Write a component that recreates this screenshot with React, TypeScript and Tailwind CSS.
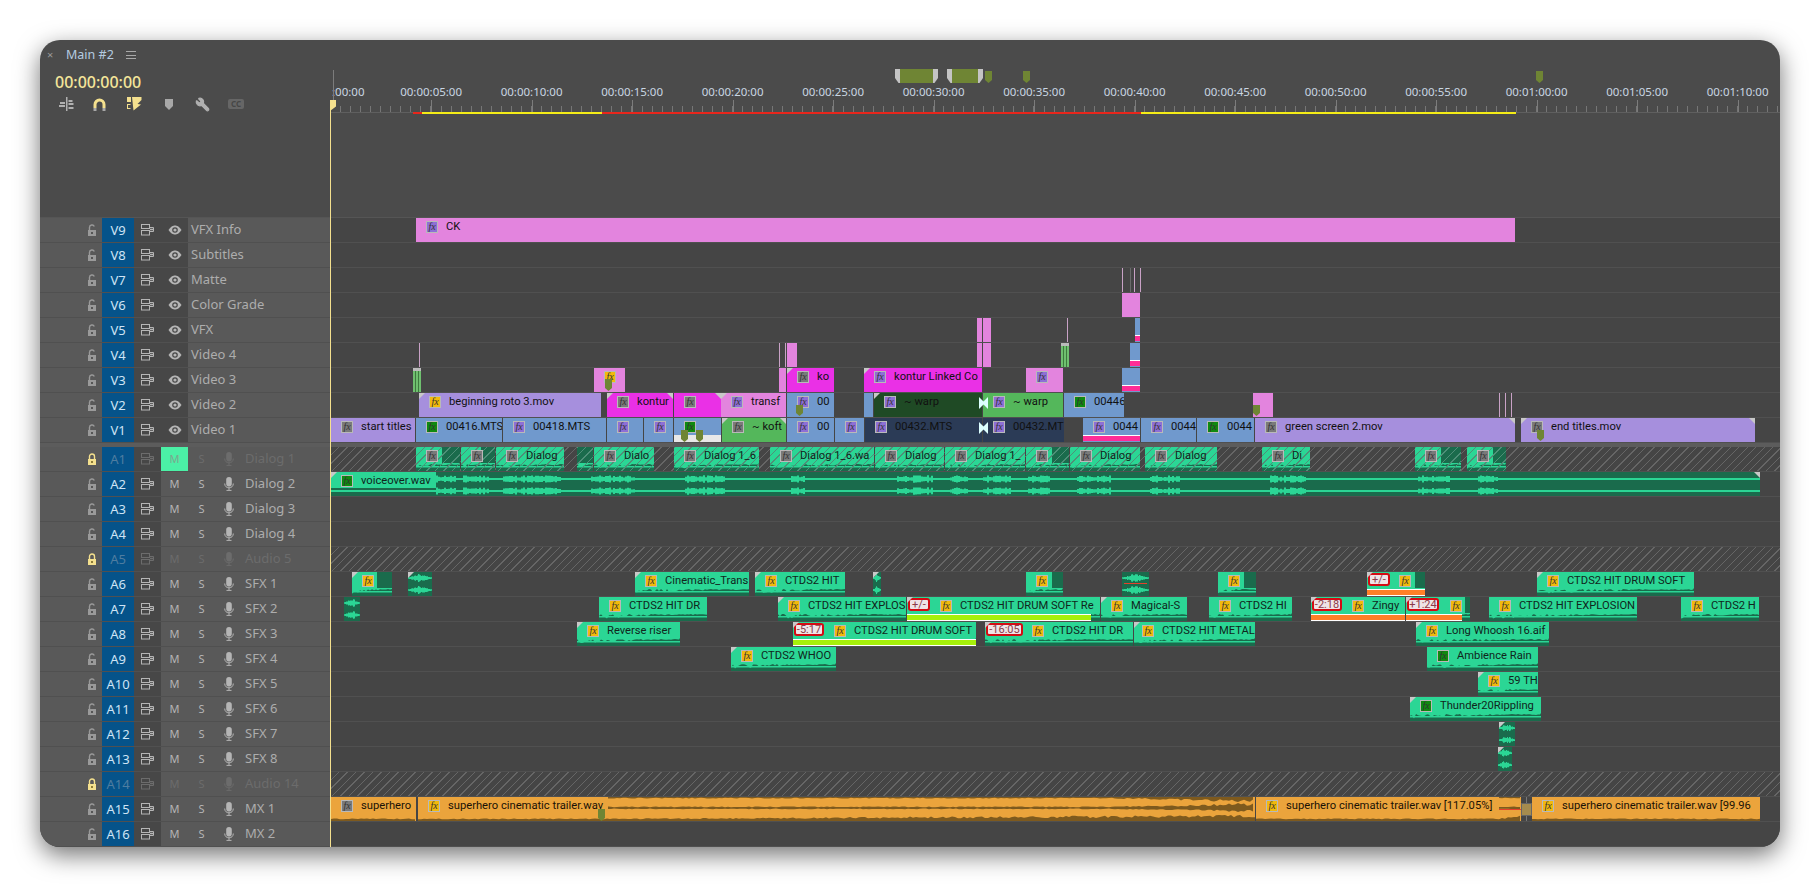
import { Wrench } from 'lucide-react';

const ORIGIN = 330;

type Fx = 'grey' | 'yellow' | 'green' | 'purple';

interface VClip {
  a: number;
  b: number;
  color: string;
  label?: string;
  fx?: Fx;
  tl?: boolean;
  tr?: boolean;
  stripe?: number; // pink stripe offset from clip top
  white?: boolean;
}

interface AClip {
  a: number;
  b: number;
  label?: string;
  fx?: Fx;
  end?: number; // where the light label zone stops
  pad?: number; // space left of the fx badge
  tag?: string;
  tagW?: number;
  bar?: string;
  barEnd?: number;
  tl?: boolean;
  mini?: boolean;
  redline?: boolean;
}

const FX_BG: Record<Fx, string> = {
  grey: 'bg-[#7a7a7a]',
  yellow: 'bg-[#f2b90c]',
  green: 'bg-[#0f8a0f]',
  purple: 'bg-[#8e6fd6]',
};

const BLUE = 'bg-[#7099cd]';
const LAV = 'bg-[#a68fdd]';
const PINK = 'bg-[#e384de]';
const MAG = 'bg-[#ea30e6]';
const GRN = 'bg-[#54b75b]';

const VIDEO: { id: string; name: string; clips: VClip[]; lines?: number[] }[] = [
  { id: 'V9', name: 'VFX Info', clips: [{ a: 416, b: 1515, color: PINK, label: 'CK', fx: 'purple' }] },
  { id: 'V8', name: 'Subtitles', clips: [] },
  { id: 'V7', name: 'Matte', clips: [], lines: [1122, 1134, 1140] },
  { id: 'V6', name: 'Color Grade', clips: [{ a: 1122, b: 1140, color: PINK }] },
  {
    id: 'V5',
    name: 'VFX',
    clips: [
      { a: 977, b: 982, color: PINK },
      { a: 983, b: 991, color: PINK },
      { a: 1135, b: 1140, color: BLUE, stripe: 17 },
    ],
    lines: [1067],
  },
  {
    id: 'V4',
    name: 'Video 4',
    clips: [
      { a: 787, b: 797, color: PINK },
      { a: 977, b: 982, color: PINK },
      { a: 983, b: 991, color: PINK },
      { a: 1130, b: 1140, color: BLUE, stripe: 17 },
    ],
    lines: [779, 785, 419],
  },
  {
    id: 'V3',
    name: 'Video 3',
    clips: [
      { a: 594, b: 625, color: PINK, fx: 'yellow' },
      { a: 779, b: 786, color: PINK },
      { a: 787, b: 834, color: MAG, label: 'ko', fx: 'grey', tl: true },
      { a: 864, b: 982, color: MAG, label: 'kontur Linked Co', fx: 'purple', tl: true },
      { a: 1026, b: 1063, color: PINK, fx: 'purple' },
      { a: 1122, b: 1140, color: BLUE, stripe: 17 },
    ],
  },
  {
    id: 'V2',
    name: 'Video 2',
    clips: [
      { a: 419, b: 601, color: LAV, label: 'beginning roto 3.mov', fx: 'yellow', tl: true },
      { a: 607, b: 673, color: MAG, label: 'kontur', fx: 'grey', tl: true, tr: true },
      { a: 674, b: 721, color: MAG, fx: 'grey', tr: true },
      { a: 721, b: 786, color: PINK, label: 'transf', fx: 'purple', tl: true },
      { a: 787, b: 834, color: BLUE, label: '00', fx: 'purple' },
      { a: 864, b: 873, color: BLUE },
      { a: 874, b: 982, color: 'bg-[#1f4a25]', label: '~ warp', fx: 'purple', tl: true },
      { a: 983, b: 1063, color: GRN, label: '~ warp', fx: 'purple' },
      { a: 1064, b: 1124, color: BLUE, label: '00446', fx: 'green' },
      { a: 1253, b: 1273, color: PINK },
    ],
    lines: [1499, 1505, 1511],
  },
  {
    id: 'V1',
    name: 'Video 1',
    clips: [
      { a: 331, b: 415, color: LAV, label: 'start titles', fx: 'grey' },
      { a: 416, b: 502, color: BLUE, label: '00416.MTS', fx: 'green' },
      { a: 503, b: 606, color: BLUE, label: '00418.MTS', fx: 'purple' },
      { a: 607, b: 643, color: BLUE, fx: 'purple' },
      { a: 644, b: 673, color: BLUE, fx: 'purple' },
      { a: 674, b: 721, color: BLUE, fx: 'green', white: true },
      { a: 722, b: 786, color: GRN, label: '~ koft', fx: 'grey', tl: true, tr: true },
      { a: 787, b: 834, color: BLUE, label: '00', fx: 'purple' },
      { a: 835, b: 864, color: BLUE, fx: 'purple' },
      { a: 865, b: 982, color: 'bg-[#2b3b56]', label: '00432.MTS', fx: 'purple' },
      { a: 983, b: 1064, color: 'bg-[#2b3b56]', label: '00432.MT', fx: 'purple' },
      { a: 1083, b: 1140, color: BLUE, label: '0044', fx: 'purple', stripe: 17 },
      { a: 1141, b: 1196, color: BLUE, label: '0044', fx: 'purple' },
      { a: 1197, b: 1254, color: BLUE, label: '0044', fx: 'green' },
      { a: 1255, b: 1515, color: LAV, label: 'green screen 2.mov', fx: 'grey', tr: true },
      { a: 1521, b: 1755, color: LAV, label: 'end titles.mov', fx: 'grey', tl: true, tr: true },
    ],
  },
];

const AUDIO: { id: string; name: string; locked?: boolean; clips: AClip[] }[] = [
  {
    id: 'A1',
    name: 'Dialog 1',
    locked: true,
    clips: [
      { a: 416, b: 460, fx: 'grey', end: 442 },
      { a: 461, b: 495, fx: 'grey', end: 481 },
      { a: 496, b: 564, label: 'Dialog', fx: 'grey' },
      { a: 577, b: 593, end: 577 },
      { a: 594, b: 654, label: 'Dialo', fx: 'grey' },
      { a: 674, b: 759, label: 'Dialog 1_6', fx: 'grey' },
      { a: 770, b: 874, label: 'Dialog 1_6.wa', fx: 'grey' },
      { a: 875, b: 944, label: 'Dialog', fx: 'grey' },
      { a: 945, b: 1025, label: 'Dialog 1_', fx: 'grey' },
      { a: 1026, b: 1069, fx: 'grey', end: 1052 },
      { a: 1070, b: 1140, label: 'Dialog', fx: 'grey' },
      { a: 1145, b: 1217, label: 'Dialog', fx: 'grey' },
      { a: 1262, b: 1310, label: 'Di', fx: 'grey' },
      { a: 1415, b: 1461, fx: 'grey', end: 1441 },
      { a: 1467, b: 1506, fx: 'grey', end: 1493 },
    ],
  },
  { id: 'A2', name: 'Dialog 2', clips: [] },
  { id: 'A3', name: 'Dialog 3', clips: [] },
  { id: 'A4', name: 'Dialog 4', clips: [] },
  { id: 'A5', name: 'Audio 5', locked: true, clips: [] },
  {
    id: 'A6',
    name: 'SFX 1',
    clips: [
      { a: 352, b: 392, fx: 'yellow', end: 377, tl: true },
      { a: 408, b: 432, mini: true, tl: true },
      { a: 635, b: 749, label: 'Cinematic_Trans', fx: 'yellow', tl: true },
      { a: 755, b: 845, label: 'CTDS2 HIT', fx: 'yellow', tl: true },
      { a: 873, b: 881, mini: true, tl: true },
      { a: 1026, b: 1063, fx: 'yellow', end: 1052 },
      { a: 1122, b: 1149, mini: true, redline: true },
      { a: 1218, b: 1256, fx: 'yellow', end: 1244 },
      { a: 1367, b: 1425, fx: 'yellow', end: 1415, tag: '+/-', tagW: 22, pad: 32, bar: 'bg-[#ff7f27]', tl: true },
      { a: 1537, b: 1694, label: 'CTDS2 HIT DRUM SOFT', fx: 'yellow', tl: true },
    ],
  },
  {
    id: 'A7',
    name: 'SFX 2',
    clips: [
      { a: 344, b: 360, mini: true },
      { a: 599, b: 707, label: 'CTDS2 HIT DR', fx: 'yellow' },
      { a: 778, b: 906, label: 'CTDS2 HIT EXPLOS', fx: 'yellow', tl: true },
      { a: 907, b: 1100, label: 'CTDS2 HIT DRUM SOFT Re', fx: 'yellow', tag: '+/-', tagW: 22, pad: 33, bar: 'bg-[#a6f00a]', barEnd: 1091, tl: true },
      { a: 1101, b: 1187, label: 'Magical-S', fx: 'yellow', tl: true },
      { a: 1209, b: 1292, label: 'CTDS2 HI', fx: 'yellow' },
      { a: 1311, b: 1405, label: 'Zingy', fx: 'yellow', tag: '-2:18', tagW: 30, pad: 41, bar: 'bg-[#ff7f27]', tl: true },
      { a: 1406, b: 1470, fx: 'yellow', end: 1465, tag: '+1:24', tagW: 32, pad: 44, bar: 'bg-[#ff7f27]', barEnd: 1462, tl: true },
      { a: 1489, b: 1637, label: 'CTDS2 HIT EXPLOSION', fx: 'yellow' },
      { a: 1681, b: 1759, label: 'CTDS2 H', fx: 'yellow' },
    ],
  },
  {
    id: 'A8',
    name: 'SFX 3',
    clips: [
      { a: 577, b: 680, label: 'Reverse riser', fx: 'yellow', tl: true },
      { a: 793, b: 976, label: 'CTDS2 HIT DRUM SOFT', fx: 'yellow', tag: '-5:17', tagW: 30, pad: 41, bar: 'bg-[#a6f00a]', tl: true },
      { a: 985, b: 1133, label: 'CTDS2 HIT DR', fx: 'yellow', tag: '-16:05', tagW: 37, pad: 47, tl: true },
      { a: 1134, b: 1255, label: 'CTDS2 HIT METAL', fx: 'yellow', pad: 8, tl: true },
      { a: 1416, b: 1549, label: 'Long Whoosh 16.aif', fx: 'yellow', tl: true },
    ],
  },
  {
    id: 'A9',
    name: 'SFX 4',
    clips: [
      { a: 731, b: 836, label: 'CTDS2 WHOO', fx: 'yellow', tl: true },
      { a: 1427, b: 1538, label: 'Ambience Rain', fx: 'green' },
    ],
  },
  { id: 'A10', name: 'SFX 5', clips: [{ a: 1478, b: 1538, label: '59 TH', fx: 'yellow', tl: true }] },
  { id: 'A11', name: 'SFX 6', clips: [{ a: 1410, b: 1541, label: 'Thunder20Rippling', fx: 'green', tl: true }] },
  { id: 'A12', name: 'SFX 7', clips: [{ a: 1499, b: 1515, mini: true, tl: true }] },
  { id: 'A13', name: 'SFX 8', clips: [{ a: 1498, b: 1512, mini: true, tl: true }] },
  { id: 'A14', name: 'Audio 14', locked: true, clips: [] },
  { id: 'A15', name: 'MX 1', clips: [] },
  { id: 'A16', name: 'MX 2', clips: [] },
];

const VOICE_BLOBS: [number, number][] = [
  [436, 455], [463, 488], [503, 561], [591, 634], [685, 725], [791, 804], [897, 932], [950, 968],
  [983, 1011], [1028, 1049], [1077, 1111], [1150, 1180], [1270, 1306], [1418, 1450], [1478, 1498],
];

const MARKERS: [number, number, number][] = [
  [605, 379, 12],
  [796, 405, 11],
  [681, 430, 12],
  [696, 430, 12],
  [1253, 405, 11],
  [1537, 430, 11],
  [598, 809, 12],
];

function rng(seed: number) {
  let s = seed * 9301 + 49297;
  return () => {
    s = (s * 9301 + 49297) % 233280;
    return s / 233280;
  };
}

// irregular mass hanging from the top of the lower strip of an audio clip
function massPath(w: number, seed: number) {
  const r = rng(seed);
  let d = 'M0 0';
  for (let x = 0; x <= w; x += 2) {
    const env = Math.max(0.2, 1 - x / (w * 0.9));
    d += `L${x} ${(1 + r() * 5 * env).toFixed(1)}`;
  }
  return d + `L${w} 0Z`;
}

function blobPath(ranges: [number, number][], cy: number, seed: number) {
  const r = rng(seed);
  let d = '';
  for (const [a, b] of ranges) {
    for (let x = a; x < b; x += 2) {
      const h = 1.5 + r() * 2.2;
      d += `M${x} ${(cy - h).toFixed(1)}h2v${(h * 2).toFixed(1)}h-2Z`;
    }
  }
  return d;
}

// a rough bulge on a short clip's channel line
function bulgePath(w: number, cy: number, seed: number) {
  const r = rng(seed);
  let d = '';
  for (let x = 0; x < w; x += 1) {
    const h = 0.8 + (1 + r() * 2.4) * Math.sin((Math.PI * (x + 0.5)) / w) ** 2;
    d += `M${x} ${(cy - h).toFixed(1)}h1v${(h * 2).toFixed(1)}h-1Z`;
  }
  return d;
}

function bandPath(w: number, seed: number, kind: 'top' | 'mid' | 'bot', growFrom: number) {
  const r = rng(seed);
  const top: string[] = [];
  const bot: string[] = [];
  for (let x = 0; x <= w; x += 3) {
    const g = x > growFrom ? 1 + ((x - growFrom) / (w - growFrom)) * 2.4 : 1;
    const h = (0.7 + r() * 0.9) * g;
    if (kind === 'top') {
      top.push(`${x} 0`);
      bot.unshift(`${x} ${h.toFixed(1)}`);
    } else if (kind === 'bot') {
      top.push(`${x} 24`);
      bot.unshift(`${x} ${(24 - h - 1).toFixed(1)}`);
    } else {
      top.push(`${x} ${(11 - h).toFixed(1)}`);
      bot.unshift(`${x} ${(11 + h * 0.8).toFixed(1)}`);
    }
  }
  return 'M' + top.concat(bot).join('L') + 'Z';
}

function FxBadge({ fx }: { fx: Fx }) {
  return (
    <span
      className={`w-[12px] h-[12px] shrink-0 flex items-center justify-center border border-[#b9b9b9] font-['Liberation_Serif',serif] italic text-[10px] leading-none text-[#333] ${FX_BG[fx]}`}
    >
      fx
    </span>
  );
}

function Corner({ right }: { right?: boolean }) {
  return right ? (
    <span className="absolute right-0 top-0 w-[6px] h-[6px] bg-[#c8c8c8] [clip-path:polygon(0_0,100%_0,100%_100%)]" />
  ) : (
    <span className="absolute left-0 top-0 w-[6px] h-[6px] bg-[#c8c8c8] [clip-path:polygon(0_0,100%_0,0_100%)]" />
  );
}

function VideoClip({ clip }: { clip: VClip }) {
  const width = clip.b - clip.a;
  return (
    <div
      className={`absolute top-0 bottom-0 overflow-hidden ${clip.color}`}
      style={{ left: clip.a - ORIGIN, width }}
    >
      {clip.fx && (
        <div className="flex items-center gap-[8px] h-[16px] pl-[10px] pt-[2px] whitespace-nowrap text-[#111]">
          <FxBadge fx={clip.fx} />
          {clip.label && <span>{clip.label}</span>}
        </div>
      )}
      {clip.white && <div className="absolute left-0 right-0 bottom-0 h-[7px] bg-[#e8e8e8]" />}
      {clip.stripe !== undefined && (
        <div
          className="absolute left-0 right-0 h-[6px] bg-[#ff2d96] border-t border-white"
          style={{ top: clip.stripe }}
        />
      )}
      {clip.tl && <Corner />}
      {clip.tr && <Corner right />}
    </div>
  );
}

function AudioClip({ clip, hatched }: { clip: AClip; hatched?: boolean }) {
  const width = clip.b - clip.a;
  const zone = clip.end !== undefined ? clip.end - clip.a : width;
  return (
    <div
      className="absolute top-0 bottom-0 overflow-hidden bg-[#1a6b4c]"
      style={{ left: clip.a - ORIGIN, width }}
    >
      {clip.mini ? (
        <svg className="absolute inset-0" width={width} height={24}>
          <path d={bulgePath(width, 6, clip.a)} fill="#2bd695" />
          <path d={bulgePath(width, 18, clip.a)} fill="#2bd695" />
          {clip.redline && <rect x={2} y={11} width={width - 4} height={1} fill="#e4412b" />}
        </svg>
      ) : (
        <>
          <div className="absolute left-0 top-0 h-[16px] bg-[#2bd695]" style={{ width: zone }} />
          <svg className="absolute left-0 top-[16px]" width={width} height={8}>
            <path d={massPath(width, clip.a)} fill="#2bd695" />
            <rect x={0} y={3} width={width} height={1.5} fill="#2bd695" />
          </svg>
        </>
      )}
      {hatched && (
        <div className="absolute inset-0 bg-[repeating-linear-gradient(135deg,#4f8f78_0,#4f8f78_1px,transparent_1px,transparent_6px)]" />
      )}
      {clip.fx && (
        <div
          className="absolute left-0 top-0 flex items-center gap-[8px] h-[16px] pt-[2px] whitespace-nowrap text-[#10261c]"
          style={{ paddingLeft: clip.pad ?? 10 }}
        >
          <FxBadge fx={clip.fx} />
          {clip.label && <span>{clip.label}</span>}
        </div>
      )}
      {clip.bar && (
        <div
          className={`absolute left-0 top-[17px] h-[7px] border-y border-white ${clip.bar}`}
          style={{ width: clip.barEnd ? clip.barEnd - clip.a : width }}
        />
      )}
      {clip.tag && (
        <span
          className="absolute left-[1px] top-[1px] h-[13px] flex items-center justify-center rounded-[3px] border-2 border-[#d40b14] bg-[#efe3e6] text-[#8d3a48] text-[11px] leading-none"
          style={{ width: clip.tagW }}
        >
          {clip.tag}
        </span>
      )}
      {clip.tl && <Corner />}
    </div>
  );
}

function VoiceOver() {
  const width = 1760 - 331;
  const shifted = VOICE_BLOBS.map(([a, b]) => [a - 331, b - 331] as [number, number]);
  return (
    <div className="absolute top-0 bottom-0 left-[1px] bg-[#1a6b4c] overflow-hidden" style={{ width }}>
      <div className="absolute left-0 top-0 w-[105px] h-[16px] bg-[#2bd695]" />
      <svg className="absolute inset-0" width={width} height={24}>
        <rect x={0} y={6} width={width} height={2} fill="#2bd695" />
        <rect x={0} y={18} width={width} height={2} fill="#2bd695" />
        <path d={blobPath(shifted, 7, 11)} fill="#2bd695" />
        <path d={blobPath(shifted, 19, 11)} fill="#2bd695" />
        <rect x={0} y={16} width={105} height={1} fill="#1a6b4c" />
      </svg>
      <div className="absolute left-0 top-0 flex items-center gap-[8px] h-[16px] pl-[10px] pt-[2px] whitespace-nowrap text-[#10261c]">
        <FxBadge fx="green" />
        <span>voiceover.wav</span>
      </div>
      <Corner />
      <Corner right />
    </div>
  );
}

function MusicClip({ a, b, label, fx, labelEnd, grow }: { a: number; b: number; label: string; fx: Fx; labelEnd: number; grow?: number }) {
  const width = b - a;
  const zone = labelEnd - a;
  return (
    <div className="absolute top-0 bottom-0 bg-[#eba43c] overflow-hidden" style={{ left: a - ORIGIN, width }}>
      <svg className="absolute inset-0" width={width} height={24}>
        <path d={bandPath(width, a, 'bot', zone)} fill="#7e5a1e" />
        {zone < width && (
          <g transform={`translate(${zone} 0)`}>
            <path d={bandPath(width - zone, a + 1, 'top', grow ?? width)} fill="#7e5a1e" />
            <path d={bandPath(width - zone, a + 2, 'mid', grow ?? width)} fill="#7e5a1e" />
          </g>
        )}
      </svg>
      <div className="absolute left-0 top-0 flex items-center gap-[8px] h-[16px] pl-[10px] pt-[2px] whitespace-nowrap text-[#1a1206]">
        <FxBadge fx={fx} />
        <span>{label}</span>
      </div>
    </div>
  );
}

function Marker({ h = 12 }: { h?: number }) {
  return (
    <svg width="7" height={h} viewBox={`0 0 7 ${h}`} className="block">
      <path d={`M0 0H7V${h - 3}L3.5 ${h}L0 ${h - 3}Z`} fill="#6f8534" />
    </svg>
  );
}

function RangeMarker({ left, width }: { left: string; width: string }) {
  return (
    <div className={`absolute top-[29px] h-[14px] flex ${left} ${width}`}>
      <span className="w-[5px] bg-[#c4c4c4] [clip-path:polygon(0_0,100%_0,100%_100%,70%_100%,0_65%)]" />
      <span className="flex-1 bg-[#6f8534]" />
      <span className="w-[5px] bg-[#c4c4c4] [clip-path:polygon(0_0,100%_0,100%_65%,30%_100%,0_100%)]" />
    </div>
  );
}

function LockIcon({ locked }: { locked?: boolean }) {
  const c = locked ? '#f4e08e' : '#9a9a9a';
  return (
    <svg width="10" height="12" viewBox="0 0 10 12">
      <path d={locked ? 'M2.5 6V3.5a2.5 2.5 0 0 1 5 0V6' : 'M2.5 6V3.5a2.5 2.5 0 0 1 4.8-1'} fill="none" stroke={c} strokeWidth="1.4" />
      <rect x="1" y="6" width="8" height="6" fill={c} />
      <rect x="4" y="8" width="2" height="2" fill={locked ? '#8d7c38' : '#555'} />
    </svg>
  );
}

function ToggleIcon({ dim }: { dim?: boolean }) {
  const c = dim ? '#6c6c6c' : '#b5b5b5';
  return (
    <svg width="13" height="12" viewBox="0 0 13 12" fill="none" stroke={c} strokeWidth="1">
      <rect x="0.5" y="0.5" width="8" height="4" />
      <rect x="0.5" y="6.5" width="8" height="4.5" />
      <path d="M9 3.5h3.5v4H9" />
      <path d="M9 5.5h3" strokeWidth="1.5" />
    </svg>
  );
}

function EyeIcon() {
  return (
    <svg width="14" height="10" viewBox="0 0 14 10">
      <path d="M0.5 5C3 1.200 5 .5 7 .5s4 .7 6.5 4.500C11 8.800 9 9.500 7 9.500S3 8.800.5 5Z" fill="#b5b5b5" />
      <circle cx="7" cy="5" r="2.8" fill="#474747" />
      <circle cx="7" cy="5" r="1.6" fill="#b5b5b5" />
    </svg>
  );
}

function MicIcon({ dim }: { dim?: boolean }) {
  const c = dim ? '#6c6c6c' : '#b5b5b5';
  return (
    <svg width="10" height="14" viewBox="0 0 10 14">
      <rect x="2.2" y="0" width="5.6" height="9.5" rx="2.8" fill={c} />
      <path d="M.7 6.500c0 2.800 1.800 4.300 4.300 4.300s4.300-1.500 4.300-4.300M5 11v2M2.500 13.400h5" fill="none" stroke={c} strokeWidth="1" />
    </svg>
  );
}

function VideoHead({ id, name }: { id: string; name: string }) {
  return (
    <div className="w-[290px] h-full shrink-0 flex bg-[#595959] text-[13px]">
      <div className="w-[62px] flex items-center justify-end pr-[5px]">
        <LockIcon />
      </div>
      <div className="w-[32px] pt-[1px] bg-[#05538a] text-[#cfe4f5] flex items-center justify-center">{id}</div>
      <div className="w-[54px] bg-[#474747] flex items-center">
        <div className="w-[27px] flex justify-center">
          <ToggleIcon />
        </div>
        <div className="w-[27px] flex justify-center">
          <EyeIcon />
        </div>
      </div>
      <div className="flex-1 flex items-center pl-[3px] text-[#adadad]">{name}</div>
    </div>
  );
}

function AudioHead({ id, name, locked }: { id: string; name: string; locked?: boolean }) {
  return (
    <div className="w-[290px] h-full shrink-0 flex bg-[#595959] text-[13px]">
      <div className="w-[62px] flex items-center justify-end pr-[5px]">
        <LockIcon locked={locked} />
      </div>
      <div className={`w-[32px] pt-[1px] bg-[#05538a] flex items-center justify-center ${locked ? 'text-[#4f7da0]' : 'text-[#cfe4f5]'}`}>{id}</div>
      <div className="w-[27px] bg-[#474747] flex items-center justify-center">
        <ToggleIcon dim={locked} />
      </div>
      <div
        className={`w-[27px] flex items-center justify-center text-[11px] ${
          id === 'A1' ? 'bg-[#4bf0a6] text-[#7ca68f]' : locked ? 'text-[#6c6c6c]' : 'text-[#b5b5b5]'
        }`}
      >
        M
      </div>
      <div className={`w-[27px] flex items-center justify-center text-[11px] ${locked ? 'text-[#6c6c6c]' : 'text-[#b5b5b5]'}`}>S</div>
      <div className="w-[27px] flex items-center justify-center">
        <MicIcon dim={locked} />
      </div>
      <div className={`flex-1 flex items-center pl-[3px] ${locked ? 'text-[#6c6c6c]' : 'text-[#adadad]'}`}>{name}</div>
    </div>
  );
}

function TopTools() {
  return (
    <div className="flex items-center h-[18px] mt-[1px] pl-[19px]">
      <svg width="15" height="14" viewBox="0 0 15 14" fill="#b0b0b0">
        <rect x="7" y="0" width="1.500" height="14" />
        <rect x="1" y="5" width="5" height="2" />
        <rect x="0" y="8" width="6" height="2" />
        <rect x="9.500" y="3" width="4" height="2" />
        <rect x="9.500" y="6" width="5" height="2" />
        <rect x="9.500" y="10" width="5" height="2" />
      </svg>
      <svg className="ml-[19px]" width="13" height="13" viewBox="0 0 13 13" fill="none">
        <path d="M2 10V6.500a4.500 4.500 0 0 1 9 0V10" stroke="#f4e08e" strokeWidth="3" />
        <rect x="0.500" y="10" width="3" height="3" fill="#a8a8a8" />
        <rect x="9.500" y="10" width="3" height="3" fill="#a8a8a8" />
      </svg>
      <svg className="ml-[21px]" width="15" height="14" viewBox="0 0 15 14" fill="#f4e08e">
        <rect x="0" y="0" width="4" height="5" />
        <rect x="0" y="7" width="3.500" height="1" />
        <rect x="0" y="7" width="1" height="5" />
        <rect x="0" y="11" width="3.500" height="1" />
        <path d="M5 0H14.500V3L10.500 7L14 7.500L6.500 13.500Z" />
      </svg>
      <svg className="ml-[23px]" width="8" height="11" viewBox="0 0 8 11" fill="#a8a8a8">
        <path d="M0 0H8V7L4 11L0 7Z" />
      </svg>
      <Wrench className="ml-[22px] -scale-x-100" size={15} color="#b0b0b0" fill="#b0b0b0" />
      <span className="ml-[18px] w-[16px] h-[10px] rounded-[2px] bg-[#666] text-[#474747] text-[8px] font-bold leading-[10px] text-center">CC</span>
    </div>
  );
}

const TIME_LABELS = Array.from({ length: 14 }, (_, i) => {
  const total = (i + 1) * 5;
  const mm = String(Math.floor(total / 60)).padStart(2, '0');
  const ss = String(total % 60).padStart(2, '0');
  return { x: (i + 1) * 100.5 + 0.6, text: `00:${mm}:${ss}:00` };
});

function Ruler() {
  return (
    <div className="relative flex-1 h-full">
      {/* zoom handles and sequence markers above the time scale */}
      <RangeMarker left="left-[565px]" width="w-[43px]" />
      <RangeMarker left="left-[617px]" width="w-[36px]" />
      <div className="absolute left-[655px] top-[31px]"><Marker /></div>
      <div className="absolute left-[693px] top-[31px]"><Marker /></div>
      <div className="absolute left-[1206px] top-[31px]"><Marker /></div>
      <span className="absolute left-[2px] top-[44px] text-[11.5px] leading-[16px] text-[#c9d6e2]">:00:00</span>
      {TIME_LABELS.map((t) => (
        <span
          key={t.text}
          className="absolute top-[44px] w-[80px] -ml-[40px] text-center text-[11.5px] leading-[16px] text-[#c9d6e2]"
          style={{ left: t.x }}
        >
          {t.text}
        </span>
      ))}
      {TIME_LABELS.map((t) => (
        <span key={t.text} className="absolute top-[60px] w-px h-[12px] bg-[#7c7c7c]" style={{ left: t.x }} />
      ))}
      <div className="absolute left-0 right-0 top-[66px] h-[6px] bg-[repeating-linear-gradient(90deg,#767676_0,#767676_1px,transparent_1px,transparent_10.05px)]" />
      <div className="absolute left-0 right-0 top-[72px] h-[1px] bg-[#5f5f5f]" />
      <div className="absolute left-[83px] top-[72px] w-[9px] h-[2px] bg-[#e8261c]" />
      <div className="absolute left-[92px] top-[72px] w-[180px] h-[2px] bg-[#f4ec17]" />
      <div className="absolute left-[272px] top-[72px] w-[539px] h-[2px] bg-[#e8261c]" />
      <div className="absolute left-[811px] top-[72px] w-[375px] h-[2px] bg-[#f4ec17]" />
    </div>
  );
}

export default function App() {
  return (
    <div className="w-[1820px] h-[887px] bg-white pt-[40px] pl-[40px] overflow-hidden font-['Noto_Sans',sans-serif] text-[11.5px]">
      <div className="relative w-[1740px] h-[807px] rounded-[20px] overflow-hidden bg-[#4b4b4b] shadow-[0_8px_24px_rgba(0,0,0,0.55)] flex flex-col">
        {/* panel header with timecode, tools and ruler */}
        <div className="h-[178px] shrink-0 flex border-b border-[#555]">
          <div className="w-[290px] shrink-0">
            <div className="flex items-center h-[30px] pl-[7px] text-[#b4cbe0] text-[12.5px]">
              <span className="text-[#9a9a9a] text-[11px] w-[19px]">×</span>
              <span>Main #2</span>
              <span className="ml-[12px] w-[10px] h-[8px] border-y border-[#a8a8a8] flex items-center">
                <span className="w-full h-px bg-[#a8a8a8]" />
              </span>
            </div>
            <div className="pl-[15px] h-[24px] flex items-center text-[#f4e59a] text-[16px] font-medium">00:00:00:00</div>
            <TopTools />
          </div>
          <Ruler />
        </div>

        {/* video tracks */}
        {VIDEO.map((t) => (
          <div key={t.id} className="flex h-[25px] shrink-0 border-b border-[#505050]">
            <VideoHead id={t.id} name={t.name} />
            <div className="relative flex-1 bg-[#454545] font-['Roboto',sans-serif] text-[11.2px]">
              {t.clips.map((c) => (
                <VideoClip key={c.a} clip={c} />
              ))}
              {t.lines?.map((x) => (
                <span key={x} className="absolute top-0 bottom-0 w-px bg-[#c9a2c6]" style={{ left: x - ORIGIN }} />
              ))}
              {t.id === 'V7' && <span className="absolute top-0 bottom-0 left-[800px] w-px bg-[#6a6a6a]" />}
            </div>
          </div>
        ))}

        <div className="h-[4px] shrink-0 bg-[#5c5c5c]" />

        {/* audio tracks */}
        {AUDIO.map((t) => (
          <div key={t.id} className="flex h-[25px] shrink-0 border-b border-[#505050]">
            <AudioHead id={t.id} name={t.name} locked={t.locked} />
            <div
              className={`relative flex-1 bg-[#454545] font-['Roboto',sans-serif] text-[11.2px] ${
                t.locked ? 'bg-[repeating-linear-gradient(135deg,#666_0,#666_1px,transparent_1px,transparent_6px)]' : ''
              }`}
            >
              {t.clips.map((c) => (
                <AudioClip key={c.a} clip={c} hatched={t.id === 'A1'} />
              ))}
              {t.id === 'A2' && <VoiceOver />}
              {t.id === 'A15' && (
                <>
                  <MusicClip a={331} b={416} label="superhero" fx="grey" labelEnd={416} />
                  <MusicClip a={418} b={1255} label="superhero cinematic trailer.wav" fx="yellow" labelEnd={608} grow={500} />
                  <MusicClip a={1256} b={1521} label="superhero cinematic trailer.wav [117.05%]" fx="yellow" labelEnd={1499} />
                  <MusicClip a={1532} b={1760} label="superhero cinematic trailer.wav [99.96" fx="yellow" labelEnd={1760} />
                  <span className="absolute left-[1169px] top-[12px] w-[22px] h-px bg-[#e4412b]" />
                  <span className="absolute left-[1196px] top-0 bottom-0 w-px bg-[#777]" />
                  <span className="absolute left-[1191px] top-[6px] w-[11px] h-[13px] bg-[#a58b4e] border border-[#666]" />
                </>
              )}
            </div>
          </div>
        ))}

        {/* markers and edit points that sit over the clips */}
        {MARKERS.map(([x, y, h]) => (
          <div key={`${x}-${y}`} className="absolute" style={{ left: x - 40, top: y - 40 }}>
            <Marker h={h} />
          </div>
        ))}
        <div className="absolute left-[1021px] top-[303px] w-[8px] h-[24px] bg-[repeating-linear-gradient(90deg,#6fc06f_0,#6fc06f_2px,#3d7a3d_2px,#3d7a3d_3px)] border-t-[3px] border-[#bbb]" />
        <div className="absolute left-[373px] top-[328px] w-[8px] h-[24px] bg-[repeating-linear-gradient(90deg,#6fc06f_0,#6fc06f_2px,#3d7a3d_2px,#3d7a3d_3px)] border-t-[3px] border-[#bbb]" />
        <span className="absolute left-[939px] top-[357px] w-[6px] h-[12px] bg-[#dff] [clip-path:polygon(0_0,100%_50%,0_100%)]" />
        <span className="absolute left-[942px] top-[357px] w-[6px] h-[12px] bg-[#dff] [clip-path:polygon(100%_0,0_50%,100%_100%)]" />
        <span className="absolute left-[939px] top-[382px] w-[6px] h-[12px] bg-[#dff] [clip-path:polygon(0_0,100%_50%,0_100%)]" />
        <span className="absolute left-[942px] top-[382px] w-[6px] h-[12px] bg-[#dff] [clip-path:polygon(100%_0,0_50%,100%_100%)]" />

        {/* playhead */}
        <div className="absolute left-[290px] top-[60px] w-[6px] h-[11px] bg-[#f4e08e] [clip-path:polygon(0_0,100%_0,100%_60%,0_100%)]" />
        <div className="absolute left-[293px] top-[30px] w-px h-[30px] bg-[#7c7c7c]" />
        <div className="absolute left-[290px] top-[65px] bottom-0 w-px bg-[#f4e08e]" />
      </div>
    </div>
  );
}
